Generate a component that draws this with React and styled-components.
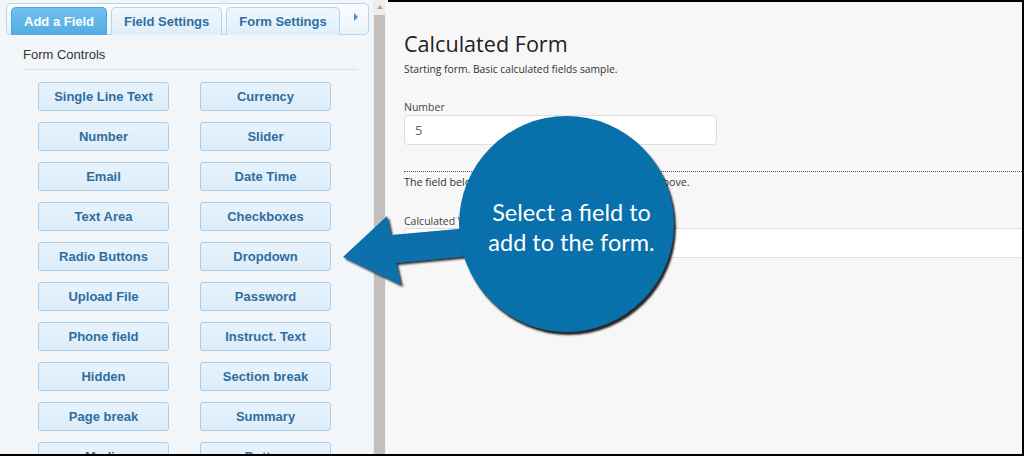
import React from 'react'
import styled, { createGlobalStyle } from 'styled-components'

const GlobalStyle = createGlobalStyle`
  html, body { margin: 0; padding: 0; }
  body { width: 1024px; height: 456px; overflow: hidden; background: #f6f6f6; }
`

const controls = [
  'Single Line Text', 'Currency',
  'Number', 'Slider',
  'Email', 'Date Time',
  'Text Area', 'Checkboxes',
  'Radio Buttons', 'Dropdown',
  'Upload File', 'Password',
  'Phone field', 'Instruct. Text',
  'Hidden', 'Section break',
  'Page break', 'Summary',
  'Media', 'Button',
]

const tabs = ['Add a Field', 'Field Settings', 'Form Settings']

const App = () => {
  return (
    <>
      <GlobalStyle />
      <Wrapper>
        <Sidebar>
          <TabBar>
            {tabs.map((t, i) => (
              <Tab key={t} active={i === 0}>{t}</Tab>
            ))}
            <TabArrow />
          </TabBar>
          <Controls>
            <SectionTitle>Form Controls</SectionTitle>
            <ButtonGrid>
              {controls.map(c => (
                <ControlButton key={c}>{c}</ControlButton>
              ))}
            </ButtonGrid>
          </Controls>
        </Sidebar>
        <ScrollBar>
          <ScrollUp />
          <ScrollThumb />
        </ScrollBar>
        <Main>
          <FormTitle>Calculated Form</FormTitle>
          <FormDesc>Starting form. Basic calculated fields sample.</FormDesc>
          <Field>
            <Label>Number</Label>
            <Input width="313px">5</Input>
          </Field>
          <Separator />
          <Note>The field below is calculated based on the number above.</Note>
          <Field wide>
            <Label>Calculated Value</Label>
            <Input />
          </Field>
        </Main>

        <Arrow width="1024" height="456" viewBox="0 0 1024 456">
          <defs>
            <filter id="sh" x="-20%" y="-20%" width="140%" height="140%">
              <feDropShadow dx="2" dy="2" stdDeviation="1" floodColor="#000" floodOpacity="0.85" />
            </filter>
          </defs>
          <polygon
            points="343,257 387,216 391,235 480,227 480,255 396,263 401,285"
            fill="#0870ab"
            filter="url(#sh)"
          />
        </Arrow>
        <Callout>
          Select a field to<br />add to the form.
        </Callout>
      </Wrapper>
    </>
  )
}

export default App

const Wrapper = styled.div`
  position: relative;
  display: flex;
  width: 1024px;
  height: 456px;
  box-sizing: border-box;
  border-bottom: 2px solid #000;
  overflow: hidden;
  background: #f6f6f6;
`

const Sidebar = styled.aside`
  width: 373px;
  flex-shrink: 0;
  background: #f3f6f9;
  padding: 3px 0 0 6px;
  box-sizing: border-box;
  overflow: hidden;
`

const TabBar = styled.div`
  position: relative;
  display: flex;
  gap: 4px;
  width: 363px;
  height: 32px;
  box-sizing: border-box;
  padding: 3px 0 0 4px;
  border: 1px solid #b4d5ee;
  border-radius: 5px;
  background: linear-gradient(#fbfdff, #eaf3fb);
`

const Tab = styled.div`
  height: 28px;
  box-sizing: border-box;
  padding: 0 12px;
  display: flex;
  align-items: center;
  border: 1px solid ${p => (p.active ? '#4ea3dc' : '#b4d5ee')};
  border-bottom: none;
  border-radius: 5px 5px 0 0;
  background: ${p => (p.active ? 'linear-gradient(#6fc0ee, #52ade4)' : 'linear-gradient(#f0f7fd, #dfeefa)')};
  color: ${p => (p.active ? '#fff' : '#2e6e9e')};
  font: bold 13px "Liberation Sans", Arial, sans-serif;
  white-space: nowrap;
`

const TabArrow = styled.span`
  position: absolute;
  right: 10px;
  top: 9px;
  width: 0;
  height: 0;
  border-top: 4px solid transparent;
  border-bottom: 4px solid transparent;
  border-left: 4px solid #4c89c8;
`

const Controls = styled.div`
  padding: 12px 15px 0 17px;
`

const SectionTitle = styled.div`
  font: 13px "Liberation Sans", Arial, sans-serif;
  color: #333;
  padding-bottom: 7px;
  border-bottom: 1px solid #dcdfe2;
  margin-bottom: 12px;
`

const ButtonGrid = styled.div`
  display: grid;
  grid-template-columns: 131px 131px;
  column-gap: 31px;
  row-gap: 11px;
  padding-left: 15px;
`

const ControlButton = styled.div`
  height: 29px;
  box-sizing: border-box;
  display: flex;
  align-items: center;
  justify-content: center;
  border: 1px solid #aacfec;
  border-radius: 3px;
  background: linear-gradient(#e8f3fc, #dcedfa);
  color: #2e6e9e;
  font: bold 13px "Liberation Sans", Arial, sans-serif;
  white-space: nowrap;
`

const ScrollBar = styled.div`
  width: 15px;
  flex-shrink: 0;
  box-sizing: border-box;
  padding: 5px 2px 0;
  background: #eeeeee;
  border-right: 2px solid #fafafa;
  display: flex;
  flex-direction: column;
  align-items: center;
`

const ScrollUp = styled.span`
  width: 0;
  height: 0;
  border-left: 3px solid transparent;
  border-right: 3px solid transparent;
  border-bottom: 4px solid #a5a5a5;
  margin-bottom: 6px;
`

const ScrollThumb = styled.div`
  flex: 1;
  width: 11px;
  background: #c2bfbc;
`

const Main = styled.main`
  flex: 1;
  box-sizing: border-box;
  border-top: 2px solid #000;
  border-right: 2px solid #000;
  padding: 27px 0 0 16px;
  background: #f7f7f7;
  font-family: "Open Sans", "Noto Sans", sans-serif;
  color: #333;
`

const FormTitle = styled.h1`
  margin: 0;
  font-weight: 400;
  font-size: 21.6px;
  line-height: 30px;
  color: #222;
`

const FormDesc = styled.p`
  margin: 3px 0 0;
  font-size: 10.3px;
  line-height: 14px;
`

const Field = styled.div`
  margin-top: ${p => (p.wide ? '25px' : '24px')};
`

const Label = styled.div`
  font-size: 10.5px;
  line-height: 14px;
  color: #444;
`

const Input = styled.div`
  width: ${p => p.width || 'auto'};
  height: 30px;
  box-sizing: border-box;
  margin-top: ${p => (p.width ? '1px' : '0')};
  padding: 0 10px;
  display: flex;
  align-items: center;
  background: #fff;
  border: 1px solid #dedede;
  border-right-width: ${p => (p.width ? '1px' : '0')};
  border-radius: ${p => (p.width ? '4px' : '4px 0 0 4px')};
  font-size: 13px;
  color: #666;
`

const Separator = styled.div`
  margin-top: 26px;
  border-top: 1px dotted #555;
`

const Note = styled.p`
  margin: 3px 0 0;
  font-size: 10.7px;
  line-height: 14px;
`

const Arrow = styled.svg`
  position: absolute;
  left: 0;
  top: 0;
  pointer-events: none;
`

const Callout = styled.div`
  position: absolute;
  left: 459px;
  top: 116px;
  width: 215px;
  height: 216px;
  border-radius: 50%;
  background: #0870ab;
  box-shadow: 2px 3px 2px rgba(0, 0, 0, 0.85);
  display: flex;
  align-items: center;
  justify-content: center;
  text-align: center;
  color: #fff;
  font: 23.5px/30px Lato, "Open Sans", sans-serif;
  padding: 6px 0 0 10px;
  box-sizing: border-box;
`
